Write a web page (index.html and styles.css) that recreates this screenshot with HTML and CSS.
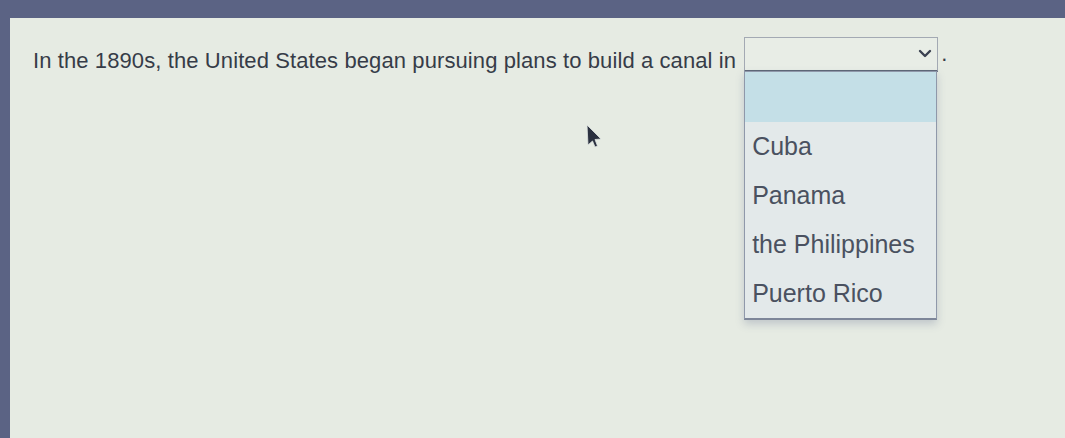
FILE: index.html
```html
<!DOCTYPE html>
<html lang="en">
<head>
    <meta charset="UTF-8">
    <meta name="viewport" content="width=device-width, initial-scale=1.0">
    <title>Question</title>
    <link rel="stylesheet" href="styles.css">
</head>
<body>
    <div class="panel">
        <div class="question">
            <span class="prompt">In the 1890s, the United States began pursuing plans to build a canal in</span>
            <div class="select-wrap">
                <div class="select">
                    <svg class="chevron" width="14" height="10" viewBox="0 0 14 10">
                        <path d="M2 2 L7 7 L12 2" fill="none" stroke="#3a4150" stroke-width="2.4" stroke-linecap="round" stroke-linejoin="round"/>
                    </svg>
                </div>
                <ul class="options">
                    <li class="option active"></li>
                    <li class="option">Cuba</li>
                    <li class="option">Panama</li>
                    <li class="option">the Philippines</li>
                    <li class="option">Puerto Rico</li>
                </ul>
            </div>
            <span class="period">.</span>
        </div>
        <svg class="cursor" width="18" height="26" viewBox="0 0 18 26">
            <path d="M2 1 L16 15 L10 15.5 L12.5 22 L10 23 L7.5 17 L3 21 Z" fill="#2b3140" stroke="#dfe5e2" stroke-width="0.8"/>
        </svg>
    </div>
</body>
</html>
```

FILE: styles.css
```css
body {
    margin: 0;
    padding: 0;
    background: #5b6384;
    font-family: 'Liberation Sans', Arial, sans-serif;
    height: 438px;
    overflow: hidden;
}
.panel {
    position: relative;
    margin: 18px 0 0 10px;
    height: 420px;
    padding: 19px 0 0 23px;
    box-sizing: border-box;
    background: #e6ebe3;
}
.question {
    display: flex;
    align-items: flex-start;
}
.prompt {
    margin-top: 11px;
    margin-right: 8px;
    font-size: 22px;
    line-height: 26px;
    letter-spacing: 0.1px;
    color: #363c48;
}
.select-wrap {
    position: relative;
}
.select {
    width: 192px;
    height: 32px;
    border: 1px solid #a3a9b3;
    border-bottom: 2px solid #5f6778;
    background: #e8ede6;
    position: relative;
}
.chevron {
    position: absolute;
    right: 5px;
    top: 11px;
}
.period {
    margin: 4px 0 0 3px;
    font-size: 22px;
    line-height: 26px;
    color: #363c48;
}
.options {
    position: absolute;
    top: 34px;
    left: 0;
    width: 191px;
    margin: 0;
    padding: 0;
    list-style: none;
    background: #e3e9ea;
    border: 1px solid #8f98aa;
    border-bottom: 2px solid #7d8699;
    box-shadow: 0 4px 8px rgba(80, 90, 130, 0.25);
}
.option {
    height: 49px;
    padding-left: 7px;
    font-size: 25px;
    line-height: 49px;
    color: #4a5160;
}
.option.active {
    height: 50px;
    background: #c4dfe7;
}
.cursor {
    position: absolute;
    left: 575px;
    top: 106px;
}
```
